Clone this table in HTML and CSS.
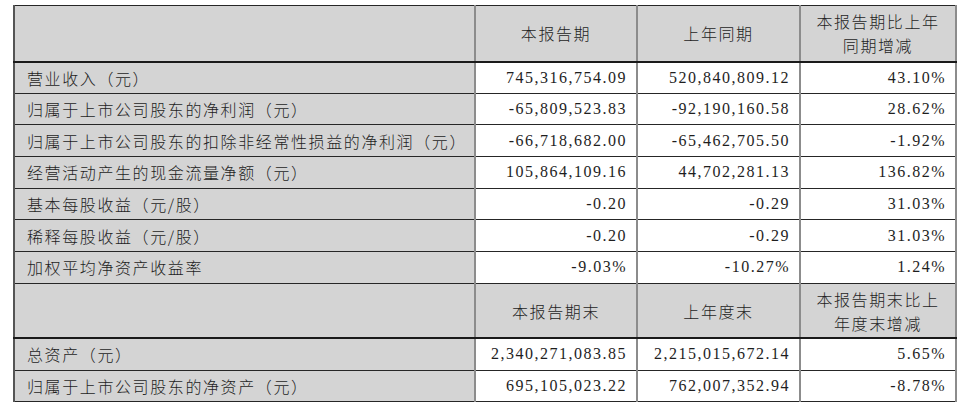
FILE: index.html
```html
<!DOCTYPE html>
<html lang="zh-CN">
<head>
<meta charset="utf-8">
<title>主要会计数据和财务指标</title>
<link rel="stylesheet" href="styles.css">
</head>
<body>
<div class="page">
<table class="fin">
  <colgroup>
    <col class="c-label">
    <col class="c-cur">
    <col class="c-prev">
    <col class="c-chg">
  </colgroup>
  <tbody>
    <tr class="head">
      <td class="label"></td>
      <td class="hd">本报告期</td>
      <td class="hd">上年同期</td>
      <td class="hd">本报告期比上年<br>同期增减</td>
    </tr>
    <tr class="row">
      <td class="label">营业收入（元）</td>
      <td class="num">745,316,754.09</td>
      <td class="num">520,840,809.12</td>
      <td class="num">43.10%</td>
    </tr>
    <tr class="row">
      <td class="label">归属于上市公司股东的净利润（元）</td>
      <td class="num">-65,809,523.83</td>
      <td class="num">-92,190,160.58</td>
      <td class="num">28.62%</td>
    </tr>
    <tr class="row">
      <td class="label">归属于上市公司股东的扣除非经常性损益的净利润（元）</td>
      <td class="num">-66,718,682.00</td>
      <td class="num">-65,462,705.50</td>
      <td class="num">-1.92%</td>
    </tr>
    <tr class="row">
      <td class="label">经营活动产生的现金流量净额（元）</td>
      <td class="num">105,864,109.16</td>
      <td class="num">44,702,281.13</td>
      <td class="num">136.82%</td>
    </tr>
    <tr class="row">
      <td class="label">基本每股收益（元/股）</td>
      <td class="num">-0.20</td>
      <td class="num">-0.29</td>
      <td class="num">31.03%</td>
    </tr>
    <tr class="row">
      <td class="label">稀释每股收益（元/股）</td>
      <td class="num">-0.20</td>
      <td class="num">-0.29</td>
      <td class="num">31.03%</td>
    </tr>
    <tr class="row">
      <td class="label">加权平均净资产收益率</td>
      <td class="num">-9.03%</td>
      <td class="num">-10.27%</td>
      <td class="num">1.24%</td>
    </tr>
    <tr class="head head2">
      <td class="label"></td>
      <td class="hd">本报告期末</td>
      <td class="hd">上年度末</td>
      <td class="hd">本报告期末比上<br>年度末增减</td>
    </tr>
    <tr class="row">
      <td class="label">总资产（元）</td>
      <td class="num">2,340,271,083.85</td>
      <td class="num">2,215,015,672.14</td>
      <td class="num">5.65%</td>
    </tr>
    <tr class="row">
      <td class="label">归属于上市公司股东的净资产（元）</td>
      <td class="num">695,105,023.22</td>
      <td class="num">762,007,352.94</td>
      <td class="num">-8.78%</td>
    </tr>
  </tbody>
</table>
</div>
</body>
</html>
```

FILE: styles.css
```css
html, body {
  margin: 0;
  padding: 0;
  background: #ffffff;
}

.page {
  padding: 5px 0 0 13px;
}

.fin {
  border-collapse: collapse;
  table-layout: fixed;
  width: 942px;
  color: #1e1e1e;
  font-family: "Noto Sans CJK SC", "Liberation Serif", sans-serif;
  font-size: 16px;
  font-weight: 300;
}

.c-label { width: 461px; }
.c-cur { width: 162px; }
.c-prev { width: 163px; }
.c-chg { width: 156px; }

.fin td {
  border-top: 1px solid #262626;
  border-bottom: 1px solid #262626;
  border-left: 2px solid #8c8c8c;
  border-right: 2px solid #8c8c8c;
  padding: 0 10px;
  vertical-align: middle;
  white-space: nowrap;
}

.fin td.label {
  border-left: 2px solid #555555;
}

.head {
  height: 56px;
}

.head2 {
  height: 55px;
}

.head td {
  background: #d4d4d4;
  border-bottom: 2px solid #1a1a1a;
}

.row {
  height: 31.7px;
}

.label {
  background: #d4d4d4;
  padding-left: 12px !important;
  letter-spacing: 1.6px;
  line-height: 20px;
}

.hd {
  text-align: center;
  letter-spacing: 1.6px;
  line-height: 24px;
  padding: 0 4px !important;
}

.num {
  text-align: right;
  font-family: "Liberation Serif", "Noto Sans CJK SC", serif;
  font-size: 16px;
  font-weight: 400;
  letter-spacing: 1.5px;
  padding-right: 9px !important;
  padding-left: 2px !important;
  background: #ffffff;
}
```
